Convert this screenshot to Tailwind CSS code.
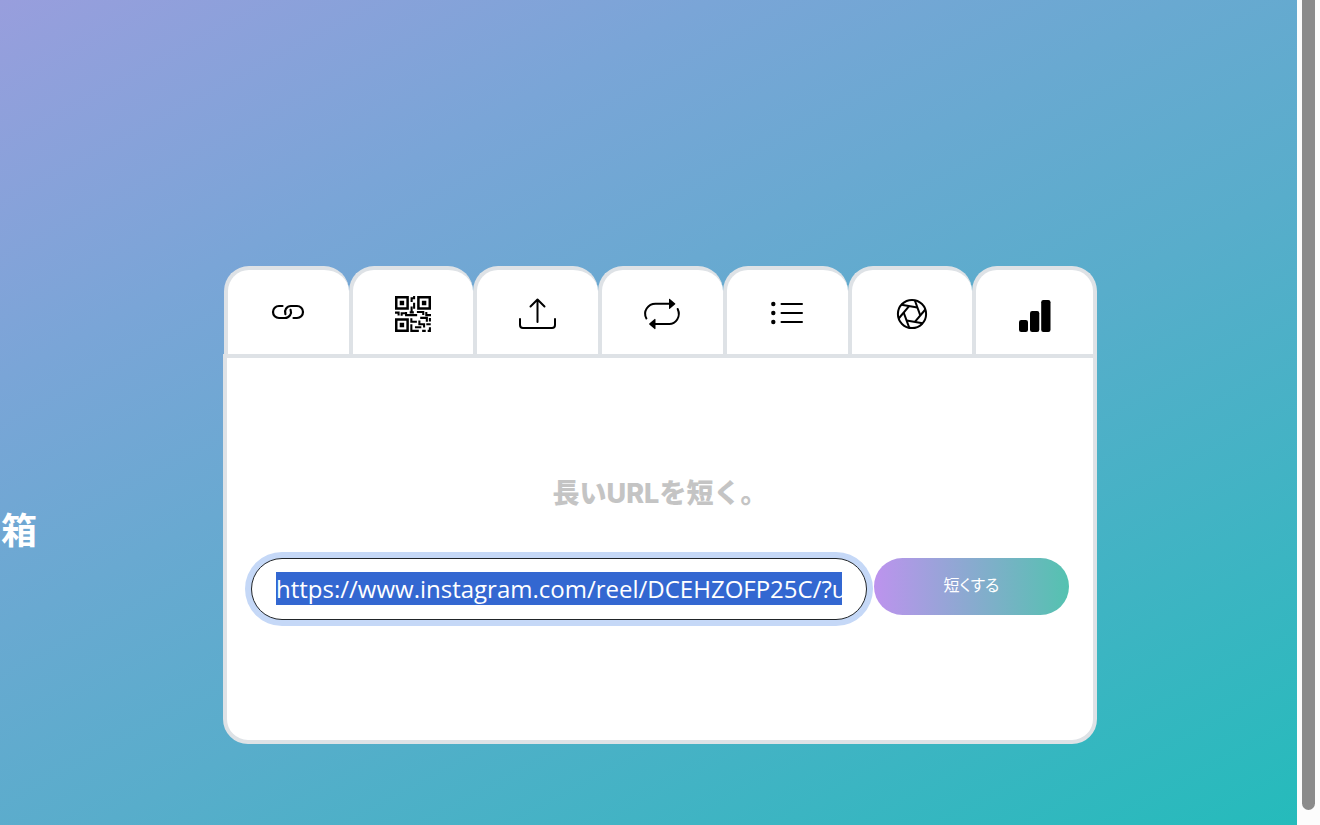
<!DOCTYPE html>
<html lang="ja">
<head>
    <meta charset="UTF-8">
    <meta name="viewport" content="width=device-width, initial-scale=1.0">
    <title>URL短縮ツール</title>
    <script src="https://cdn.jsdelivr.net/npm/@tailwindcss/browser@4"></script>
</head>
<body class="flex min-h-screen bg-[#fcfcfc] font-['Open_Sans','Noto_Sans_CJK_JP',sans-serif]">
    <main class="flex flex-1 items-center bg-[linear-gradient(152deg,#989edd_0%,#7aa5d7_25%,#58adcb_58%,#25bbbb_100%)] pt-[185px]">
        <div class="w-[223px] shrink-0 pt-[52px] pl-px">
            <h1 class="text-4xl font-bold text-white">箱</h1>
        </div>

        <div class="flex-1">
            <!-- タブ -->
            <div role="tablist" class="ml-px grid grid-cols-7">
                <button type="button" aria-label="リンク" class="flex h-[88px] items-center justify-center rounded-t-[25px] border-t-4 border-l-4 border-[#dee2e6] bg-white">
                    <svg class="h-10 w-10" viewBox="0 0 40 40" fill="none" stroke="#000" stroke-width="2.2" stroke-linecap="round">
                        <path d="M14.5 14H11a6 6 0 0 0 0 12h6a6 6 0 0 0 5.6-8.2"/>
                        <path d="M17.4 22.2A6 6 0 0 1 23 14h6a6 6 0 0 1 0 12h-3.5"/>
                    </svg>
                </button>
                <button type="button" aria-label="QRコード" class="flex h-[88px] items-center justify-center rounded-t-[25px] border-t-4 border-l-4 border-[#dee2e6] bg-white">
                    <svg class="h-10 w-10" viewBox="0 0 40 40">
                        <g transform="translate(2 4) scale(2.77)">
                            <path fill="none" stroke="#000" stroke-width=".9" d="M.45.45h4.1v4.100H.45zM8.450.45h4.100v4.100H8.450zM.45 8.450h4.100v4.100H.45z"/>
                            <path d="M1.700 1.700h1.600v1.600H1.700zM9.700 1.700h1.600v1.600H9.700zM1.700 9.700h1.600v1.600H1.700z"/>
                            <path fill="none" stroke="#000" stroke-width=".75" d="M6.900 0v.8H6v1.400M6.900 2.400v2.200M6 3.800v1.900M0 6h1.300v1M2.400 7.100V6.200h1.700M4 5.800v1.100H8M5.300 5.900h1.500M7.900 5.800h2.300v1.100M11.300 5.800v1.100H13M9.100 7.900h2.400v1.400M12.600 7.900v1.300M5.900 8v1.300h2M8.800 8.800v1.400h1.700v1.200M12.900 10.200h-1.600M5.900 10.200v2.400h2.700M7.200 11.300h2.300M9.800 12.600h1.300M12.600 11.300v1.300h-.8"/>
                        </g>
                    </svg>
                </button>
                <button type="button" aria-label="アップロード" class="flex h-[88px] items-center justify-center rounded-t-[25px] border-t-4 border-l-4 border-[#dee2e6] bg-white">
                    <svg class="h-10 w-10" viewBox="0 0 40 40" fill="none" stroke="#000" stroke-width="2" stroke-linecap="round" stroke-linejoin="round">
                        <path d="M2 27v6a3 3 0 0 0 3 3h29a3 3 0 0 0 3-3v-6M19.5 30V7.500M12.500 14.500l7-7 7 7"/>
                    </svg>
                </button>
                <button type="button" aria-label="変換" class="flex h-[88px] items-center justify-center rounded-t-[25px] border-t-4 border-l-4 border-[#dee2e6] bg-white">
                    <svg class="h-10 w-10" viewBox="0 0 40 40" fill="none" stroke="#000" stroke-width="2" stroke-linecap="round">
                        <path d="M27 11.800H13.500C6 11.800 .5 19.500 4.400 26.500M35.700 17c3.500 8-2 15-8.500 15H13"/>
                        <path fill="#000" stroke="none" d="M27 7.300v9a.5.5 0 0 0 .9.400l5.300-4.500a.6.6 0 0 0 0-.8L27.900 6.900a.5.5 0 0 0-.9.400zM13.500 27.500v9a.5.5 0 0 1-.9.400l-5.300-4.500a.6.6 0 0 1 0-.8l5.300-4.500a.5.5 0 0 1 .9.400z"/>
                    </svg>
                </button>
                <button type="button" aria-label="リスト" class="flex h-[88px] items-center justify-center rounded-t-[25px] border-t-4 border-l-4 border-[#dee2e6] bg-white">
                    <svg class="h-10 w-10" viewBox="0 0 40 40" stroke="#000" stroke-width="2" stroke-linecap="round">
                        <path d="M14.500 12H35M14.500 21H35M14.500 30H35"/>
                        <g stroke="none"><circle cx="6.300" cy="12" r="2.200"/><circle cx="6.300" cy="21" r="2.200"/><circle cx="6.300" cy="30" r="2.200"/></g>
                    </svg>
                </button>
                <button type="button" aria-label="画像" class="flex h-[88px] items-center justify-center rounded-t-[25px] border-t-4 border-l-4 border-[#dee2e6] bg-white">
                    <svg class="h-10 w-10" viewBox="0 0 40 40" fill="none" stroke="#000" stroke-width="2">
                        <g transform="translate(20 22)">
                            <circle r="14.100"/>
                            <path d="M-12-7.300H4.200" transform="rotate(10)"/>
                            <path d="M-12-7.300H4.200" transform="rotate(70)"/>
                            <path d="M-12-7.300H4.200" transform="rotate(130)"/>
                            <path d="M-12-7.300H4.200" transform="rotate(190)"/>
                            <path d="M-12-7.300H4.200" transform="rotate(250)"/>
                            <path d="M-12-7.300H4.200" transform="rotate(310)"/>
                        </g>
                    </svg>
                </button>
                <button type="button" aria-label="統計" class="flex h-[88px] items-center justify-center rounded-t-[25px] border-x-4 border-t-4 border-[#dee2e6] bg-white">
                    <svg class="h-10 w-10" viewBox="0 0 40 40">
                        <rect x="4" y="28" width="9" height="12" rx="2.200"/>
                        <rect x="15" y="19" width="9.300" height="21" rx="2.200"/>
                        <rect x="26.200" y="8" width="9.300" height="32" rx="2.200"/>
                    </svg>
                </button>
            </div>

            <!-- 短縮フォーム -->
            <div class="rounded-b-[25px] border-4 border-[#dee2e6] bg-white px-6 pt-[120px] pb-[120px]">
                <h2 class="mb-12 text-center font-['Inter','Noto_Sans_CJK_JP',sans-serif] text-[27px] leading-8 font-extrabold text-[#c4c4c4]">長いURLを短く。</h2>
                <form class="flex items-start gap-[7px]" onsubmit="return false">
                    <input id="longUrl" type="text" aria-label="長いURL" value="https://www.instagram.com/reel/DCEHZOFP25C/?utm_source=ig_web_copy_link" class="h-[62px] min-w-0 flex-1 rounded-full border border-[#212529] bg-white px-6 pb-0.5 text-2xl leading-9 text-[#212529] ring-6 ring-[#c5d8f7] outline-none selection:bg-[#3367d1] selection:text-white">
                    <button type="submit" class="h-[57px] w-[195px] rounded-full bg-[linear-gradient(90deg,#bd93ee,#54c2b0)] pb-1 text-base text-white [font-feature-settings:'palt']">短くする</button>
                </form>
            </div>
        </div>

        <div class="w-[200px] shrink-0"></div>
    </main>

    <!-- スクロールバー -->
    <div class="flex w-[23px] shrink-0 pr-[5px] pb-[15px] pl-[5px]">
        <div class="flex-1 rounded-b-full bg-[#8b8b8b]"></div>
    </div>

    <script>
        // URLを全選択しておく
        const longUrl = document.getElementById('longUrl');
        longUrl.focus();
        longUrl.select();
        longUrl.scrollLeft = 0;
    </script>
</body>
</html>
